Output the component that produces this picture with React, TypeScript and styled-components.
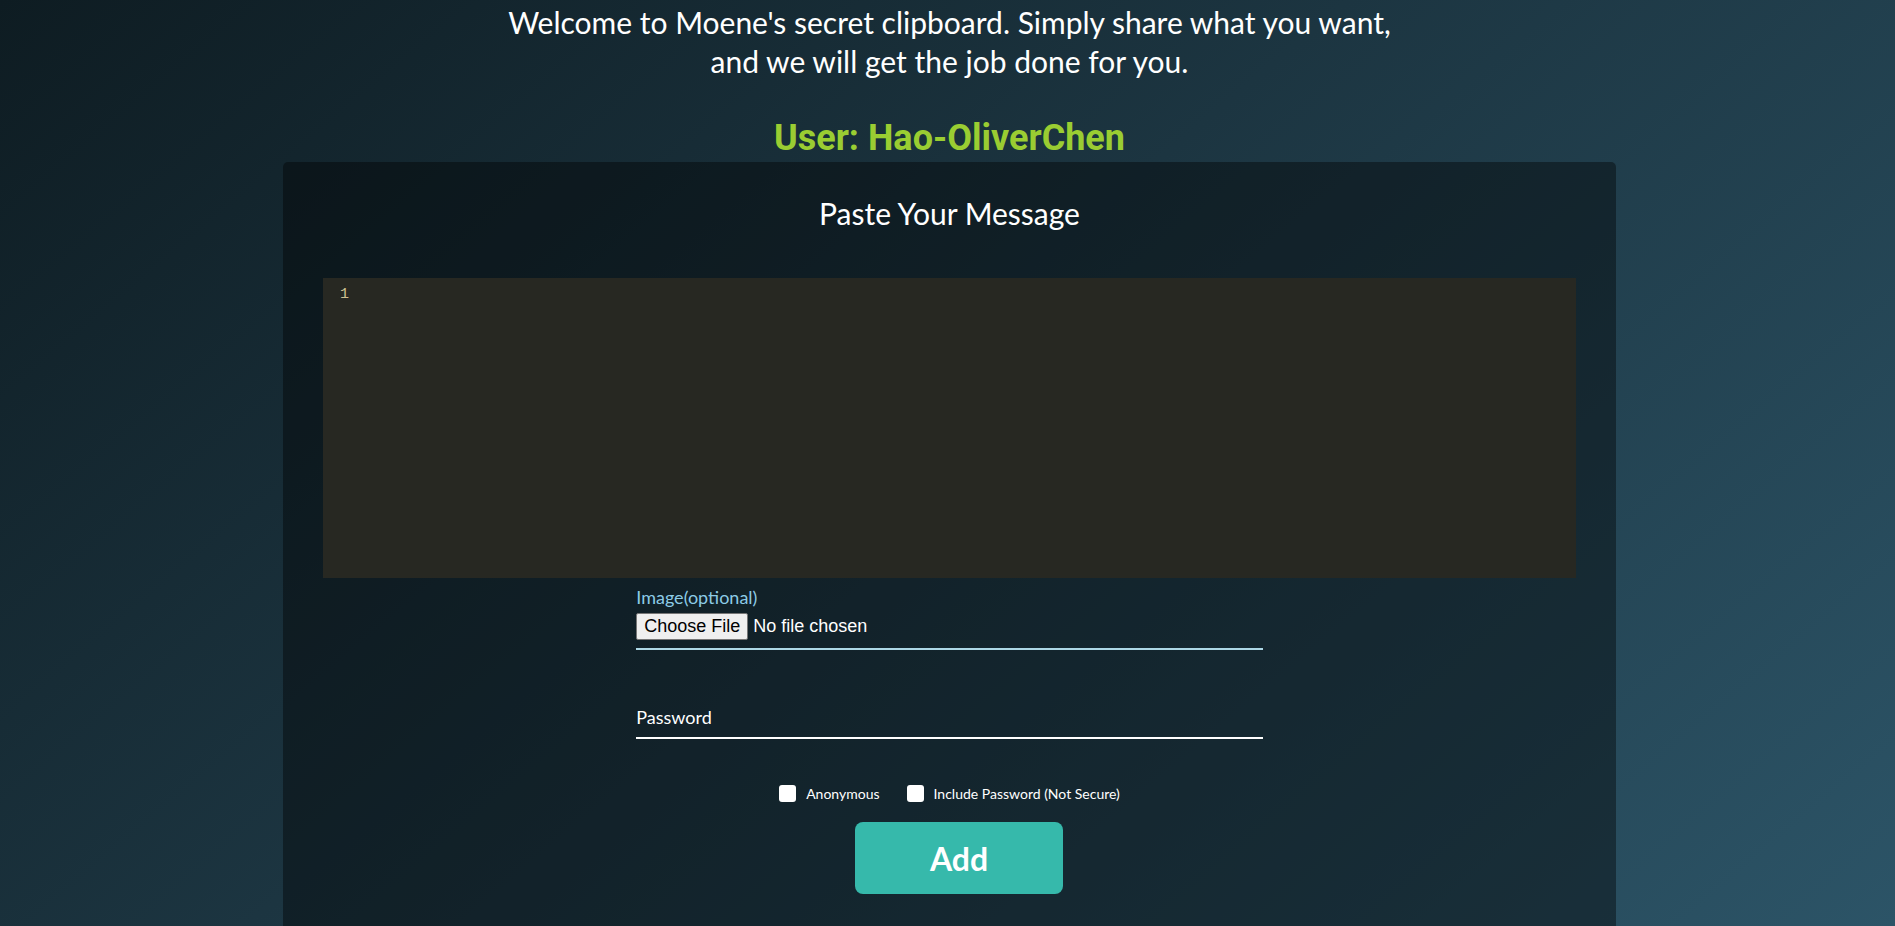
import styled, { createGlobalStyle } from "styled-components";

const GlobalStyle = createGlobalStyle`
  html, body {
    margin: 0;
    padding: 0;
  }

  body {
    min-height: 100vh;
    font-family: Lato, "Open Sans", sans-serif;
    color: #fff;
    background: linear-gradient(140deg, #0e1c22 0%, #1c3541 45%, #2c5467 100%);
    background-attachment: fixed;
  }
`;

const Page = styled.div`
  display: flex;
  flex-direction: column;
  align-items: center;
  padding: 3px 0 0 4px;
`;

const Intro = styled.p`
  margin: 0;
  font-size: 30px;
  line-height: 39px;
  text-align: center;
  color: #fff;
`;

const UserName = styled.h1`
  margin: 36px 0 3px;
  font-family: Roboto, "Liberation Sans", sans-serif;
  font-size: 36px;
  line-height: 42px;
  font-weight: 700;
  color: #9acd32;
`;

const Card = styled.section`
  box-sizing: border-box;
  width: 1333px;
  padding: 33px 40px 40px;
  border-radius: 5px;
  background: rgba(0, 0, 0, 0.4);
  display: flex;
  flex-direction: column;
`;

const CardTitle = styled.h2`
  margin: 0;
  font-size: 30px;
  line-height: 36px;
  font-weight: 400;
  text-align: center;
`;

const Editor = styled.div`
  margin-top: 47px;
  height: 300px;
  background: #272822;
  display: flex;
`;

const Gutter = styled.div`
  width: 26px;
  padding: 8px 0 0;
  text-align: right;
  font-family: "Liberation Mono", "DejaVu Sans Mono", monospace;
  font-size: 15px;
  line-height: 18px;
  color: #cfc092;
`;

const CodeArea = styled.textarea`
  flex: 1;
  margin: 0;
  padding: 8px 12px 0;
  border: none;
  outline: none;
  resize: none;
  background: transparent;
  color: #f8f8f2;
  font-family: "Liberation Mono", "DejaVu Sans Mono", monospace;
  font-size: 15px;
  line-height: 18px;
`;

const Form = styled.div`
  width: 50%;
  align-self: center;
  display: flex;
  flex-direction: column;
`;

const FieldLabel = styled.label`
  margin-top: 8px;
  font-size: 18px;
  line-height: 22px;
  color: #8ccbe6;
`;

const FileField = styled.div`
  margin-top: 5px;
  padding-bottom: 8px;
  border-bottom: 2px solid #add8e6;
  display: flex;
`;

const FileInput = styled.input`
  font-family: "Liberation Sans", Arial, sans-serif;
  font-size: 18px;
  line-height: 20px;
  color: #fff;

  &::file-selector-button {
    font-family: "Liberation Sans", Arial, sans-serif;
    font-size: 18px;
    color: #000;
    background: #efefef;
    border: 1px solid #767676;
    border-radius: 2px;
    padding: 2px 7px;
    margin-right: 5px;
  }
`;

const PasswordInput = styled.input`
  box-sizing: content-box;
  margin-top: 56px;
  height: 22px;
  padding: 0 0 9px;
  border: none;
  border-bottom: 2px solid #fff;
  outline: none;
  background: transparent;
  color: #fff;
  font-family: Lato, sans-serif;
  font-size: 18px;
  line-height: 22px;

  &::placeholder {
    color: #fff;
    opacity: 1;
  }
`;

const OptionRow = styled.div`
  margin-top: 46px;
  display: flex;
  justify-content: center;
  gap: 27px;
`;

const Option = styled.label`
  display: flex;
  align-items: center;
  gap: 10px;
  font-size: 14px;
  line-height: 17px;
  color: #fff;
`;

const Check = styled.input`
  appearance: none;
  margin: 0;
  width: 17px;
  height: 17px;
  border-radius: 3px;
  background: #fff;
`;

const ButtonRow = styled.div`
  margin-top: 20px;
  padding-left: 19px;
  display: flex;
  justify-content: center;
`;

const AddButton = styled.button`
  width: 208px;
  height: 72px;
  border: none;
  border-radius: 8px;
  background: #36b9ab;
  color: #fff;
  font-family: Lato, sans-serif;
  font-size: 32px;
  font-weight: 700;
  cursor: pointer;
`;

export default function App() {
  return (
    <>
      <GlobalStyle />
      <Page>
        <Intro>
          Welcome to Moene's secret clipboard. Simply share what you want,
          <br />
          and we will get the job done for you.
        </Intro>
        <UserName>User: Hao-OliverChen</UserName>
        <Card>
          <CardTitle>Paste Your Message</CardTitle>
          <Editor>
            <Gutter>1</Gutter>
            <CodeArea spellCheck={false} />
          </Editor>
          <Form>
            <FieldLabel htmlFor="image">Image(optional)</FieldLabel>
            <FileField>
              <FileInput id="image" type="file" />
            </FileField>
            <PasswordInput type="password" placeholder="Password" />
          </Form>
          <OptionRow>
            <Option>
              <Check type="checkbox" />
              Anonymous
            </Option>
            <Option>
              <Check type="checkbox" />
              Include Password (Not Secure)
            </Option>
          </OptionRow>
          <ButtonRow>
            <AddButton>Add</AddButton>
          </ButtonRow>
        </Card>
      </Page>
    </>
  );
}
